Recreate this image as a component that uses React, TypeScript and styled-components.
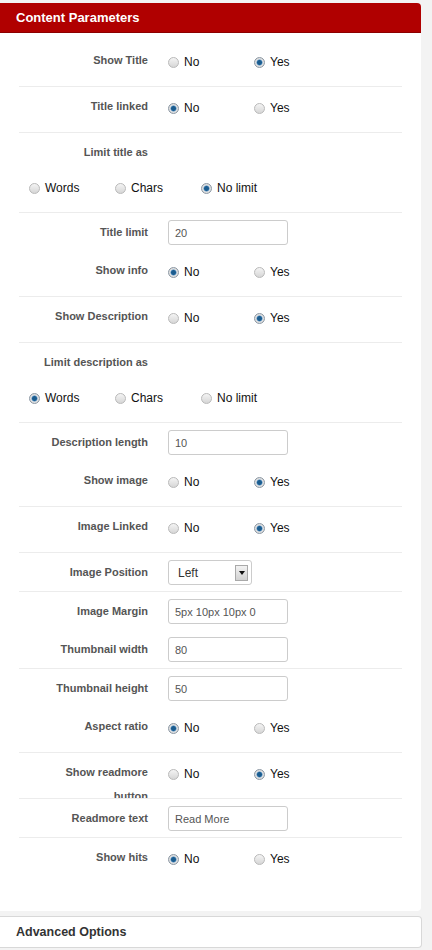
import React from 'react';
import styled, { createGlobalStyle } from 'styled-components';

const GlobalStyle = createGlobalStyle`
  html, body {
    margin: 0;
    padding: 0;
    background: #f3f3f3;
    font-family: "Liberation Sans", Arial, sans-serif;
  }
`;

const Page = styled.div`
  width: 432px;
  padding-top: 3px;
`;

const Panel = styled.section`
  width: 421px;
  background: #fff;
  border-radius: 0 4px 4px 0;
`;

const PanelHeader = styled.h3`
  margin: 0;
  height: 29px;
  padding-left: 16px;
  display: flex;
  align-items: center;
  background: #b00000;
  border-bottom: 1px solid #8c0000;
  border-radius: 0 4px 0 0;
  color: #fff;
  font-size: 13px;
  font-weight: bold;
`;

const PanelBody = styled.div`
  padding: 8px 19px 28px;
`;

const Row = styled.div<{ $height: number; $divider: boolean; $stacked?: boolean }>`
  display: flex;
  flex-direction: ${(p) => (p.$stacked ? 'column' : 'row')};
  align-items: flex-start;
  box-sizing: content-box;
  height: ${(p) => p.$height - 7}px;
  padding-top: 7px;
  overflow: hidden;
  border-bottom: ${(p) => (p.$divider ? '1px solid #ececec' : 'none')};
`;

const Label = styled.label`
  flex-shrink: 0;
  width: 115px;
  margin: 0 20px 0 14px;
  text-align: right;
  line-height: 24px;
  font-size: 11px;
  font-weight: bold;
  color: #555;
`;

const RadioGroup = styled.div<{ $stacked?: boolean }>`
  display: flex;
  align-items: center;
  height: 28px;
  margin-top: ${(p) => (p.$stacked ? '10px' : '0')};
  padding-left: ${(p) => (p.$stacked ? '10px' : '0')};
`;

const Option = styled.label`
  display: inline-flex;
  align-items: center;
  width: 86px;
  font-size: 12px;
  color: #111;
`;

const Radio = styled.span<{ $checked: boolean }>`
  box-sizing: border-box;
  width: 11px;
  height: 11px;
  margin-right: 5px;
  border-radius: 50%;
  border: 1px solid ${(p) => (p.$checked ? '#8c98a4' : '#b9b9b9')};
  background: ${(p) =>
    p.$checked
      ? 'radial-gradient(circle, #1b5c8e 0 2px, #4f8cc0 2.6px, #e4e4e4 3.4px, #c9c9c9 100%)'
      : 'linear-gradient(180deg, #f4f4f4, #d6d6d6)'};
`;

const TextInput = styled.div`
  box-sizing: border-box;
  width: 120px;
  height: 25px;
  padding-left: 6px;
  display: flex;
  align-items: center;
  border: 1px solid #cccccc;
  border-radius: 3px;
  background: #fff;
  font-size: 11px;
  color: #555;
`;

const SelectBox = styled.div`
  box-sizing: border-box;
  width: 84px;
  height: 25px;
  padding: 0 3px 0 9px;
  display: flex;
  align-items: center;
  justify-content: space-between;
  border: 1px solid #cccccc;
  border-radius: 3px;
  background: #fff;
  font-size: 12px;
  color: #333;
`;

const SelectArrow = styled.span`
  box-sizing: border-box;
  width: 13px;
  height: 16px;
  display: flex;
  align-items: center;
  justify-content: center;
  border: 1px solid #a9a9a9;
  background: linear-gradient(180deg, #f2f2f2, #d2d2d2);

  &::after {
    content: '';
    border-left: 3px solid transparent;
    border-right: 3px solid transparent;
    border-top: 4px solid #111;
  }
`;

const AdvancedBox = styled.div`
  box-sizing: border-box;
  width: 422px;
  height: 32px;
  margin-top: 5px;
  padding-left: 16px;
  display: flex;
  align-items: center;
  background: #fff;
  border: 1px solid #d8d8d8;
  border-left: none;
  border-radius: 0 4px 4px 0;
  font-size: 12.5px;
  font-weight: bold;
  color: #333;
`;

type Field =
  | { kind: 'radio' | 'stack'; label: string; options: string[]; checked: string; divider: boolean }
  | { kind: 'input' | 'select'; label: string; value: string; divider: boolean };

const yesNo = ['No', 'Yes'];
const limits = ['Words', 'Chars', 'No limit'];

const fields: Field[] = [
  { kind: 'radio', label: 'Show Title', options: yesNo, checked: 'Yes', divider: true },
  { kind: 'radio', label: 'Title linked', options: yesNo, checked: 'No', divider: true },
  { kind: 'stack', label: 'Limit title as', options: limits, checked: 'No limit', divider: true },
  { kind: 'input', label: 'Title limit', value: '20', divider: false },
  { kind: 'radio', label: 'Show info', options: yesNo, checked: 'No', divider: true },
  { kind: 'radio', label: 'Show Description', options: yesNo, checked: 'Yes', divider: true },
  { kind: 'stack', label: 'Limit description as', options: limits, checked: 'Words', divider: true },
  { kind: 'input', label: 'Description length', value: '10', divider: false },
  { kind: 'radio', label: 'Show image', options: yesNo, checked: 'Yes', divider: true },
  { kind: 'radio', label: 'Image Linked', options: yesNo, checked: 'Yes', divider: true },
  { kind: 'select', label: 'Image Position', value: 'Left', divider: true },
  { kind: 'input', label: 'Image Margin', value: '5px 10px 10px 0', divider: false },
  { kind: 'input', label: 'Thumbnail width', value: '80', divider: true },
  { kind: 'input', label: 'Thumbnail height', value: '50', divider: false },
  { kind: 'radio', label: 'Aspect ratio', options: yesNo, checked: 'No', divider: true },
  { kind: 'radio', label: 'Show readmore button', options: yesNo, checked: 'Yes', divider: true },
  { kind: 'input', label: 'Readmore text', value: 'Read More', divider: true },
  { kind: 'radio', label: 'Show hits', options: yesNo, checked: 'No', divider: false },
];

const rowHeight = { radio: 45, stack: 79, input: 38, select: 38 };

const FieldRow: React.FC<{ field: Field }> = ({ field }) => {
  const stacked = field.kind === 'stack';
  return (
    <Row $height={rowHeight[field.kind]} $divider={field.divider} $stacked={stacked}>
      <Label>{field.label}</Label>
      {(field.kind === 'radio' || field.kind === 'stack') && (
        <RadioGroup $stacked={stacked}>
          {field.options.map((opt) => (
            <Option key={opt}>
              <Radio $checked={opt === field.checked} />
              {opt}
            </Option>
          ))}
        </RadioGroup>
      )}
      {field.kind === 'input' && <TextInput>{field.value}</TextInput>}
      {field.kind === 'select' && (
        <SelectBox>
          {field.value}
          <SelectArrow />
        </SelectBox>
      )}
    </Row>
  );
};

const App: React.FC = () => (
  <Page>
    <GlobalStyle />
    <Panel>
      <PanelHeader>Content Parameters</PanelHeader>
      <PanelBody>
        {fields.map((f) => (
          <FieldRow key={f.label} field={f} />
        ))}
      </PanelBody>
    </Panel>
    <AdvancedBox>Advanced Options</AdvancedBox>
  </Page>
);

export default App;
